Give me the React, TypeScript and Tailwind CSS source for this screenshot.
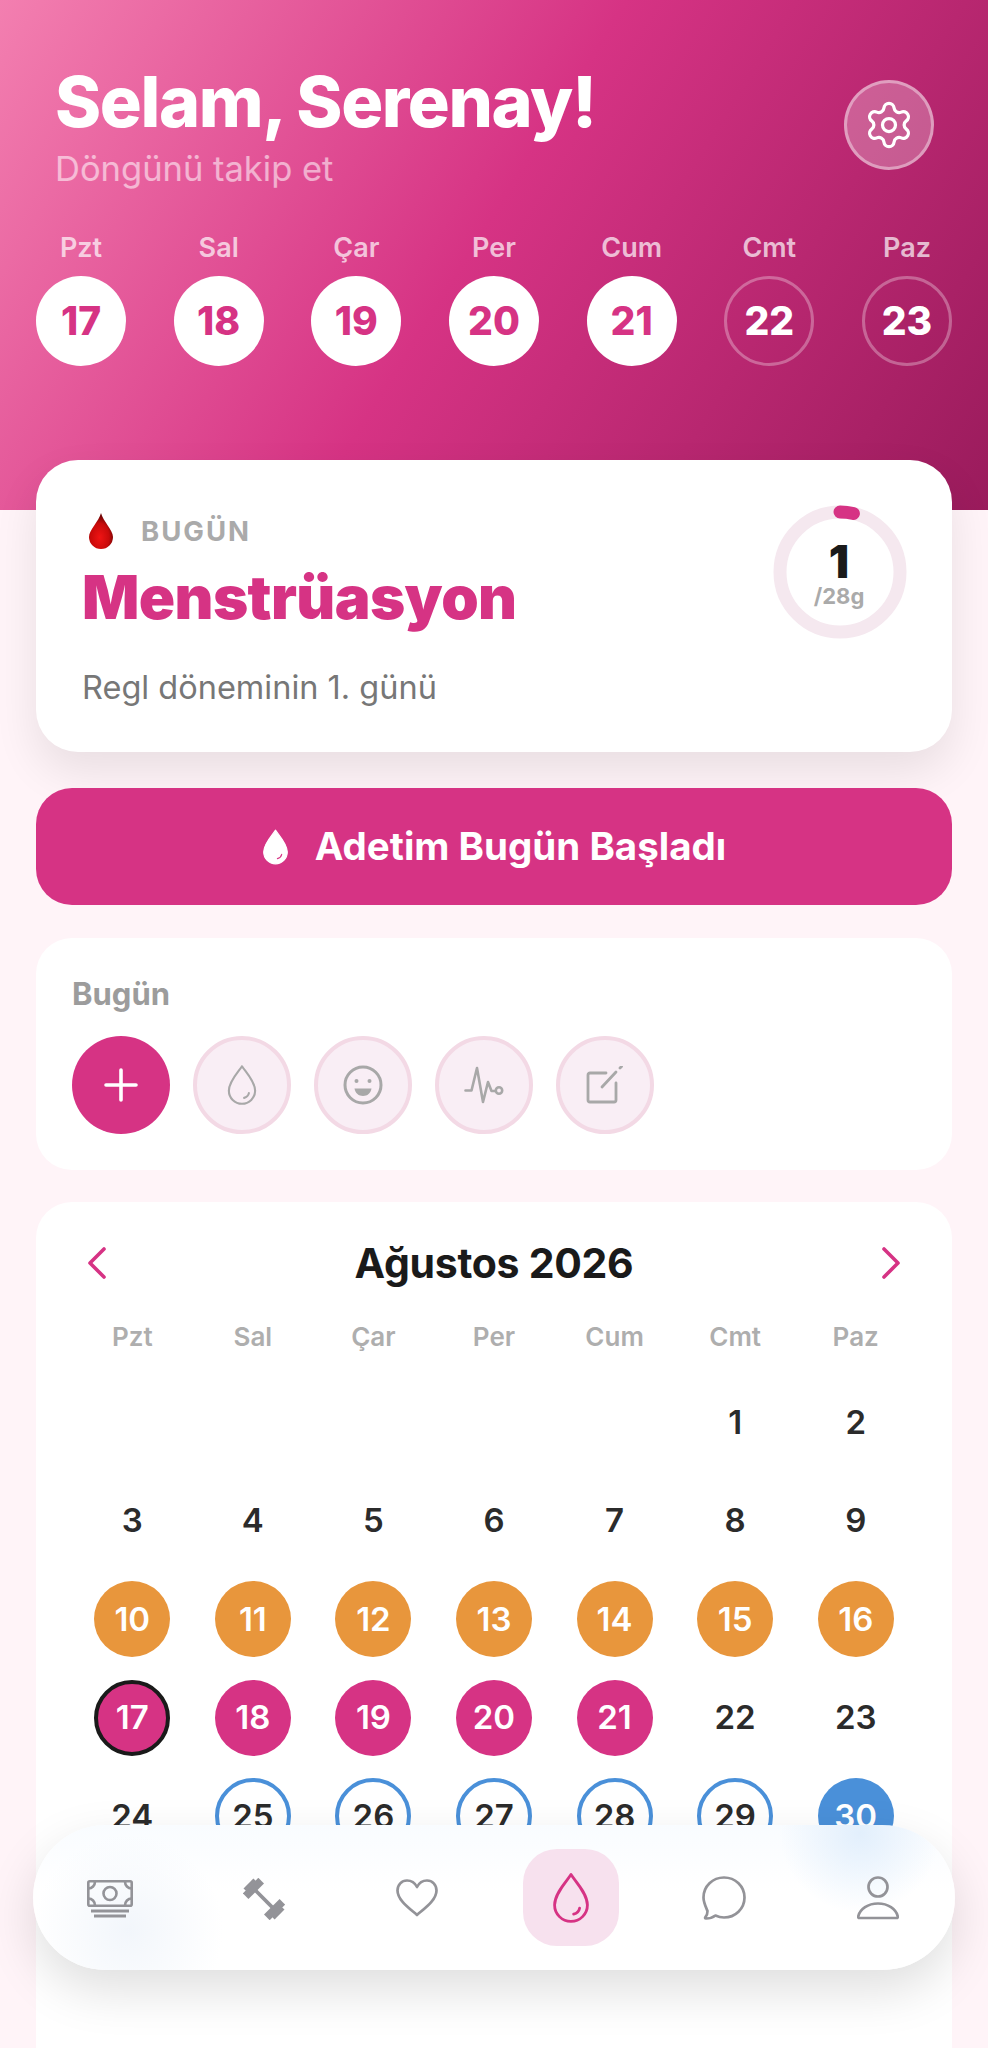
import React from 'react';
import { Settings } from 'lucide-react';

const PINK = '#d63384';

const WEEK_LABELS = ['Pzt', 'Sal', 'Çar', 'Per', 'Cum', 'Cmt', 'Paz'];

const WEEK_STRIP = [
  { day: 17, filled: true },
  { day: 18, filled: true },
  { day: 19, filled: true },
  { day: 20, filled: true },
  { day: 21, filled: true },
  { day: 22, filled: false },
  { day: 23, filled: false }
];

type DayKind = 'plain' | 'orange' | 'pink' | 'today' | 'outline' | 'blue';

function dayKind(day: number): DayKind {
  if (day >= 10 && day <= 16) return 'orange';
  if (day === 17) return 'today';
  if (day >= 18 && day <= 21) return 'pink';
  if ((day >= 25 && day <= 29) || day === 31) return 'outline';
  if (day === 30) return 'blue';
  return 'plain';
}

const dayClasses: Record<DayKind, string> = {
  plain: 'text-[#2b2b2b]',
  orange: 'bg-[#e8963c] text-white',
  pink: 'bg-[#d63384] text-white',
  today: 'bg-[#d63384] text-white border-[4px] border-[#1a1a1a]',
  outline: 'border-[4px] border-[#4a90d9] text-[#2b2b2b]',
  blue: 'bg-[#4a90d9] text-white'
};

function DropIcon({
  className,
  stroke = 'currentColor',
  fill = 'none',
  shine = 'currentColor',
  strokeWidth = 1.4
}: {
  className?: string;
  stroke?: string;
  fill?: string;
  shine?: string;
  strokeWidth?: number;
}) {
  return (
    <svg viewBox="0 0 24 32" className={className} fill={fill} stroke={stroke} strokeWidth={strokeWidth} strokeLinecap="round" strokeLinejoin="round">
      <path d="M12 1C9.500 5 1.500 13 1.500 20.500a10.500 10.500 0 0 0 21 0C22.500 13 14.500 5 12 1z" />
      <path d="M17.500 22.500c-.4 2-1.800 3.300-3.800 3.800" stroke={shine} />
    </svg>
  );
}

function BloodDrop() {
  return (
    <svg viewBox="0 0 26 36" className="w-[26px] h-[36px]">
      <defs>
        <radialGradient id="blood" cx="0.45" cy="0.68" r="0.6">
          <stop offset="0" stopColor="#f01414" />
          <stop offset="0.65" stopColor="#c80a0a" />
          <stop offset="1" stopColor="#6e0404" />
        </radialGradient>
      </defs>
      <path d="M13 0C11 8 1 17 1 24a12 12 0 0 0 24 0C25 17 15 8 13 0z" fill="url(#blood)" />
    </svg>
  );
}

function CycleRing() {
  return (
    <div className="relative w-[134px] h-[134px] shrink-0 mr-[1px]">
      <svg viewBox="0 0 134 134" className="w-[134px] h-[134px]" fill="none">
        <circle cx="67" cy="67" r="60" stroke="#f5e8ef" strokeWidth="13" />
        <path d="M67 7A60 60 0 0 1 80.400 8.500" stroke={PINK} strokeWidth="13" strokeLinecap="round" />
      </svg>
      <div className="absolute inset-0 flex flex-col items-center justify-center pt-[5px] pr-[2px]">
        <span className="text-[45px] leading-[42px] font-black text-[#1a1a1a]">1</span>
        <span className="text-[22px] leading-[26px] font-bold text-[#aaaaaa]">/28g</span>
      </div>
    </div>
  );
}

function QuickCircle({ children }: { children: React.ReactNode }) {
  return (
    <div className="w-[98px] h-[98px] rounded-full bg-[#f9eef5] border-[4px] border-[#f3d9e5] flex items-center justify-center text-[#a8a8a8]">
      {children}
    </div>
  );
}

function QuickActions() {
  return (
    <div className="mt-[33px] bg-white rounded-[36px] h-[232px] px-[36px] pt-[38px]">
      <div className="text-[31px] leading-[36px] font-bold text-[#9c9c9c]">Bugün</div>
      <div className="mt-[24px] flex gap-[23px]">
        <div className="w-[98px] h-[98px] rounded-full bg-[#d63384] flex items-center justify-center">
          <svg viewBox="0 0 34 34" className="w-[34px] h-[34px]" fill="none" stroke="#fff" strokeWidth="3.600" strokeLinecap="round">
            <path d="M17 2v30M2 17h30" />
          </svg>
        </div>
        <QuickCircle>
          <DropIcon className="w-[30px] h-[40px]" strokeWidth={1.7} />
        </QuickCircle>
        <QuickCircle>
          <svg viewBox="0 0 40 40" className="w-[40px] h-[40px]" fill="none" stroke="currentColor" strokeWidth="3">
            <circle cx="20" cy="20" r="18" />
            <circle cx="13.500" cy="16" r="2" fill="currentColor" stroke="none" />
            <circle cx="26.500" cy="16" r="2" fill="currentColor" stroke="none" />
            <path d="M11.500 23.500h17c-.8 4.800-4.200 7.500-8.500 7.500s-7.700-2.700-8.500-7.500z" fill="currentColor" stroke="none" />
          </svg>
        </QuickCircle>
        <QuickCircle>
          <svg viewBox="0 0 40 38" className="w-[40px] h-[38px]" fill="none" stroke="currentColor" strokeWidth="2.600" strokeLinecap="round" strokeLinejoin="round">
            <path d="M1.500 24.500h6L13 2l6 34 5-20 3.500 9h4" />
            <circle cx="35" cy="24.500" r="3.200" />
          </svg>
        </QuickCircle>
        <QuickCircle>
          <svg viewBox="0 0 38 38" className="w-[38px] h-[38px]" fill="none" stroke="currentColor" strokeWidth="2.800" strokeLinecap="round" strokeLinejoin="round">
            <path d="M20 7H4a2 2 0 0 0-2 2v25a2 2 0 0 0 2 2h24a2 2 0 0 0 2-2V17" />
            <path d="M16 21L30 6" />
            <path d="M34 2l1.500-1.500" />
          </svg>
        </QuickCircle>
      </div>
    </div>
  );
}

function CalendarCard() {
  const days: (number | null)[] = [null, null, null, null, null];
  for (let d = 1; d <= 31; d++) days.push(d);

  return (
    <div className="mt-[32px] bg-white rounded-[36px] h-[900px] px-[36px] pt-[44px]">
      <div className="flex items-center justify-between px-[15px] h-[34px]">
        <svg viewBox="0 0 20 32" className="w-[20px] h-[32px]" fill="none" stroke={PINK} strokeWidth="3.600" strokeLinecap="round" strokeLinejoin="round">
          <path d="M17 2L3 16l14 14" />
        </svg>
        <span className="text-[41px] leading-[34px] font-bold text-[#1a1a1a] tracking-[-0.3px]">Ağustos 2026</span>
        <svg viewBox="0 0 20 32" className="w-[20px] h-[32px]" fill="none" stroke={PINK} strokeWidth="3.600" strokeLinecap="round" strokeLinejoin="round">
          <path d="M3 2l14 14L3 30" />
        </svg>
      </div>
      <div className="mt-[41px] grid grid-cols-7">
        {WEEK_LABELS.map((label) => (
          <div key={label} className="text-center text-[26px] leading-[32px] font-semibold text-[#aeaeae]">
            {label}
          </div>
        ))}
      </div>
      <div className="mt-[20px] grid grid-cols-7">
        {days.map((day, i) => (
          <div key={i} className="h-[98.5px] flex items-center justify-center">
            {day !== null && (
              <div className={`w-[76px] h-[76px] rounded-full flex items-center justify-center text-[33px] font-semibold ${dayClasses[dayKind(day)]}`}>
                {day}
              </div>
            )}
          </div>
        ))}
      </div>
    </div>
  );
}

function BottomNav() {
  return (
    <div className="absolute left-[33px] top-[1825px] w-[922px] h-[145px] rounded-full bg-[radial-gradient(circle_at_827px_8px,#e2effc_0px,rgba(226,239,252,0)_80px),radial-gradient(circle_at_95px_105px,#f2f6fb_0px,rgba(242,246,251,0)_95px),linear-gradient(180deg,#f9fcff_0%,#ffffff_45%)] shadow-[0_20px_50px_rgba(0,0,0,0.13)] px-[29px] flex items-center justify-between">
      <div className="w-[96px] h-[97px] flex items-center justify-center text-[#939398]">
        <svg viewBox="0 0 46 38" className="w-[46px] h-[38px] mt-[3px]" fill="none" stroke="currentColor" strokeWidth="2.600">
          <rect x="1.300" y="1.300" width="43.400" height="24.400" rx="1.500" />
          <circle cx="23" cy="13.500" r="6.500" />
          <path d="M1.500 8.500c3.500 0 6.500-3 6.500-7M44.500 8.500c-3.500 0-6.500-3-6.500-7M1.500 18.500c3.500 0 6.500 3 6.500 7M44.500 18.500c-3.500 0-6.500 3-6.500 7" />
          <path d="M4 31h38M7 36h32" strokeWidth="2.800" />
        </svg>
      </div>
      <div className="w-[96px] h-[97px] flex items-center justify-center text-[#939398]">
        <svg viewBox="-21 -21 42 42" className="w-[42px] h-[42px] mt-[2px]" fill="currentColor">
          <g transform="rotate(45)">
            <rect x="-15" y="-1.800" width="30" height="3.600" />
            <rect x="-19" y="-11" width="8" height="22" />
            <rect x="-22" y="-7" width="3.500" height="14" />
            <rect x="11" y="-11" width="8" height="22" />
            <rect x="18.500" y="-7" width="3.500" height="14" />
          </g>
        </svg>
      </div>
      <div className="w-[96px] h-[97px] flex items-center justify-center text-[#939398]">
        <svg viewBox="0 0 42 38" className="w-[42px] h-[38px]" fill="none" stroke="currentColor" strokeWidth="2.700" strokeLinejoin="round">
          <path d="M21 36C13 29 1.500 21 1.500 11.500 1.500 5.700 5.700 1.500 11 1.500c4.200 0 8 2.500 10 6.500 2-4 5.800-6.500 10-6.500 5.300 0 9.500 4.200 9.500 10C40.500 21 29 29 21 36z" />
        </svg>
      </div>
      <div className="w-[96px] h-[97px] rounded-[34px] bg-[#f7e1ee] flex items-center justify-center">
        <DropIcon className="w-[38px] h-[50px]" stroke={PINK} shine={PINK} strokeWidth={1.800} />
      </div>
      <div className="w-[96px] h-[97px] flex items-center justify-center text-[#939398]">
        <svg viewBox="0 0 44 44" className="w-[44px] h-[44px]" fill="none" stroke="currentColor" strokeWidth="2.700" strokeLinejoin="round">
          <path d="M22 1.500c11.300 0 20.500 8.800 20.500 20s-9.200 20-20.500 20c-3.200 0-6-.8-8.600-2-2.300 1.800-5.300 3-9.400 3-1 0-1.200-.7-.5-1.500 1.200-1.300 2-3.200 2-6C3.800 31 1.500 26.500 1.500 21.500c0-11.200 9.200-20 20.500-20z" />
        </svg>
      </div>
      <div className="w-[96px] h-[97px] flex items-center justify-center text-[#939398]">
        <svg viewBox="0 0 42 44" className="w-[42px] h-[44px]" fill="none" stroke="currentColor" strokeWidth="2.700" strokeLinejoin="round">
          <circle cx="21" cy="11" r="9.500" />
          <path d="M2.500 42c-1 0-1.500-.6-1.300-1.600C3 33 11 27.500 21 27.500s18 5.500 19.800 12.900c.2 1-.3 1.600-1.300 1.600z" />
        </svg>
      </div>
    </div>
  );
}

export default function App() {
  return (
    <div className="relative w-[988px] h-[2048px] overflow-hidden bg-[#fff4f8] font-['Inter',sans-serif]">
      <div className="h-[510px] bg-[linear-gradient(122deg,#f37fb0_0%,#d63384_48%,#9a1b5c_100%)] px-[36px] pt-[67px]">
        <div className="flex justify-between">
          <div className="pl-[19px]">
            <h1 className="text-[70px] leading-[70px] font-extrabold text-white tracking-[-1.4px]">Selam, Serenay!</h1>
            <p className="mt-[11px] text-[34.500px] leading-[42px] text-white/55">Döngünü takip et</p>
          </div>
          <div className="mt-[13px] mr-[18px] w-[90px] h-[90px] rounded-full bg-white/25 border-[3px] border-white/40 flex items-center justify-center">
            <Settings size={52} strokeWidth={1.5} color="#ffffff" />
          </div>
        </div>
        <div className="mt-[42px] flex justify-between">
          {WEEK_STRIP.map((item, i) => (
            <div key={item.day} className="w-[90px] flex flex-col items-center">
              <span className="text-[27px] leading-[32px] font-semibold text-white/70">{WEEK_LABELS[i]}</span>
              <div
                className={
                  item.filled
                    ? 'mt-[12px] w-[90px] h-[90px] rounded-full bg-white flex items-center justify-center text-[39px] font-extrabold text-[#d63384]'
                    : 'mt-[12px] w-[90px] h-[90px] rounded-full border-[3.5px] border-white/30 flex items-center justify-center text-[39px] font-extrabold text-white'
                }
              >
                {item.day}
              </div>
            </div>
          ))}
        </div>
      </div>

      <div className="relative -mt-[50px] px-[36px]">
        <div className="bg-white rounded-[42px] h-[292px] shadow-[0_20px_45px_rgba(0,0,0,0.09)] pl-[46px] pr-[44px] pt-[45px] flex justify-between">
          <div>
            <div className="flex items-center pl-[6px] gap-[27px] h-[36px] mt-[8px]">
              <BloodDrop />
              <span className="text-[27.500px] leading-[32px] font-bold tracking-[2px] text-[#aaaaaa]">BUGÜN</span>
            </div>
            <div className="mt-[14px] text-[60px] leading-[68px] font-black text-[#d63384] tracking-[-0.6px]">Menstrüasyon</div>
            <div className="mt-[38px] text-[32.500px] leading-[38px] text-[#777777]">Regl döneminin 1. günü</div>
          </div>
          <CycleRing />
        </div>

        <div className="mt-[36px] h-[117px] rounded-[36px] bg-[#d63384] flex items-center justify-center gap-[26px]">
          <DropIcon className="w-[27px] h-[36px]" fill="#ffffff" stroke="#ffffff" shine="#d63384" strokeWidth={1} />
          <span className="text-[38.500px] font-bold text-white">Adetim Bugün Başladı</span>
        </div>

        <QuickActions />
        <CalendarCard />
      </div>

      <BottomNav />
    </div>
  );
}
